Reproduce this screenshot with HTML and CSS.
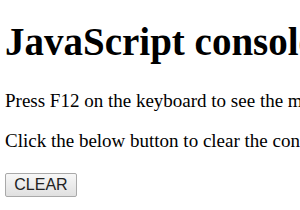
FILE: index.html
```html
<!DOCTYPE html>
<html>
<head>
<meta charset="utf-8">
<link rel="stylesheet" href="styles.css">
</head>
<body class="page">
<h1 class="title">JavaScript console clear() method</h1>
<p class="text">Press F12 on the keyboard to see the message on the console.</p>
<p class="text">Click the below button to clear the console.</p>
<button class="clear-btn">CLEAR</button>
</body>
</html>
```

FILE: styles.css
```css
html, body {
  overflow: hidden;
}
.page {
  margin: 0;
  padding: 0 5px;
  font-family: "Liberation Serif", "Times New Roman", serif;
  font-size: 19px;
  color: #000;
  background: #fff;
  white-space: nowrap;
}
.title {
  font-size: 39px;
  line-height: 44px;
  font-weight: bold;
  margin: 20px 0 26px;
}
.text {
  line-height: 22px;
  margin: 18px 0;
}
.clear-btn {
  display: block;
  margin-top: 21px;
  width: 72px;
  height: 24px;
  padding: 0;
  font-family: "Liberation Sans", Arial, sans-serif;
  font-size: 16px;
  color: #222;
  border: 1px solid #a9a9a9;
  border-radius: 2px;
  background: linear-gradient(#f7f7f7, #e0e0e0);
}
```
